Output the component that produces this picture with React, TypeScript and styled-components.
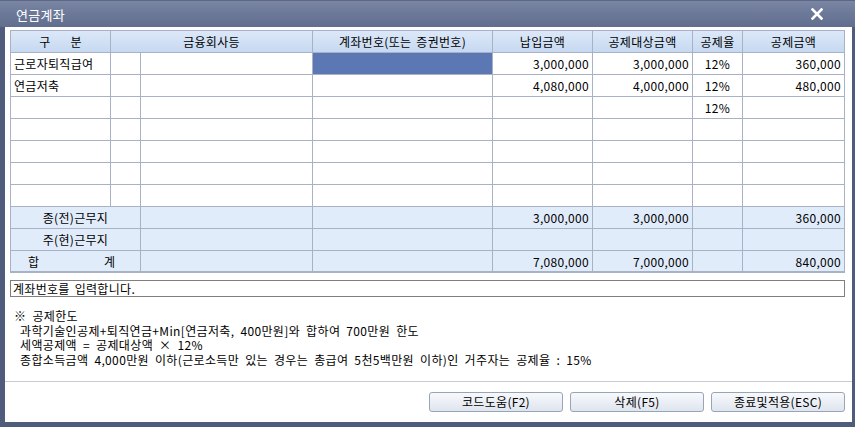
import styled, { createGlobalStyle } from 'styled-components';

const GlobalStyle = createGlobalStyle`
  html, body {
    margin: 0;
    padding: 0;
    background: #ffffff;
  }
  body {
    font-family: "Noto Sans CJK KR", "Noto Sans", sans-serif;
    font-size: 12px;
    color: #000000;
  }
`;

type Align = 'left' | 'center' | 'right';
type Tone = 'plain' | 'sum' | 'selected';

type Row = {
    label: string;
    paid: string;
    target: string;
    rate: string;
    amount: string;
    selected?: boolean;
};

const rows: Row[] = [
    { label: '근로자퇴직급여', paid: '3,000,000', target: '3,000,000', rate: '12%', amount: '360,000', selected: true },
    { label: '연금저축', paid: '4,080,000', target: '4,000,000', rate: '12%', amount: '480,000' },
    { label: '', paid: '', target: '', rate: '12%', amount: '' },
    { label: '', paid: '', target: '', rate: '', amount: '' },
    { label: '', paid: '', target: '', rate: '', amount: '' },
    { label: '', paid: '', target: '', rate: '', amount: '' },
    { label: '', paid: '', target: '', rate: '', amount: '' },
];

const sums = [
    { label: '종(전)근무지', paid: '3,000,000', target: '3,000,000', amount: '360,000' },
    { label: '주(현)근무지', paid: '', target: '', amount: '' },
    { label: '합계', paid: '7,080,000', target: '7,000,000', amount: '840,000' },
];

const notes = [
    '※ 공제한도',
    ' 과학기술인공제+퇴직연금+Min[연금저축, 400만원]와 합하여 700만원 한도',
    ' 세액공제액 = 공제대상액 × 12%',
    ' 종합소득금액 4,000만원 이하(근로소득만 있는 경우는 총급여 5천5백만원 이하)인 거주자는 공제율 : 15%',
];

const App = () => {
    return (
        <>
            <GlobalStyle />
            <Frame>
                <TitleBar>
                    <Title>연금계좌</Title>
                    <CloseButton aria-label="닫기">
                        <svg width="12" height="12" viewBox="0 0 12 12">
                            <path d="M1.5 1.5 L10.5 10.5 M10.5 1.5 L1.5 10.5" stroke="#ffffff" strokeWidth="2.6" strokeLinecap="square" />
                        </svg>
                    </CloseButton>
                </TitleBar>
                <Body>
                    <Grid>
                        <HeadCell>구&nbsp;&nbsp;&nbsp;&nbsp;분</HeadCell>
                        <HeadCell $span={2}>금융회사등</HeadCell>
                        <HeadCell>계좌번호(또는 증권번호)</HeadCell>
                        <HeadCell>납입금액</HeadCell>
                        <HeadCell>공제대상금액</HeadCell>
                        <HeadCell>공제율</HeadCell>
                        <HeadCell>공제금액</HeadCell>

                        {rows.map((row, i) => (
                            <RowGroup key={i}>
                                <Cell>{row.label}</Cell>
                                <Cell />
                                <Cell />
                                <Cell $tone={row.selected ? 'selected' : 'plain'} />
                                <Cell $align="right">{row.paid}</Cell>
                                <Cell $align="right">{row.target}</Cell>
                                <Cell $align="center">{row.rate}</Cell>
                                <Cell $align="right">{row.amount}</Cell>
                            </RowGroup>
                        ))}

                        {sums.map((row, i) => (
                            <RowGroup key={'s' + i}>
                                {row.label === '합계' ? (
                                    <TotalLabel>
                                        <span>합</span>
                                        <span>계</span>
                                    </TotalLabel>
                                ) : (
                                    <Cell $tone="sum" $span={2} $align="center">{row.label}</Cell>
                                )}
                                <Cell $tone="sum" />
                                <Cell $tone="sum" />
                                <Cell $tone="sum" $align="right">{row.paid}</Cell>
                                <Cell $tone="sum" $align="right">{row.target}</Cell>
                                <Cell $tone="sum" />
                                <Cell $tone="sum" $align="right">{row.amount}</Cell>
                            </RowGroup>
                        ))}
                    </Grid>

                    <StatusBox>계좌번호를 입력합니다.</StatusBox>

                    <Notes>
                        {notes.map((line, i) => (
                            <NoteLine key={i}>{line}</NoteLine>
                        ))}
                    </Notes>

                    <Footer>
                        <ActionButton>코드도움(F2)</ActionButton>
                        <ActionButton>삭제(F5)</ActionButton>
                        <ActionButton>종료및적용(ESC)</ActionButton>
                    </Footer>
                </Body>
            </Frame>
        </>
    );
};

const Frame = styled.div`
  width: 855px;
  height: 427px;
  box-sizing: border-box;
  display: flex;
  flex-direction: column;
  background: #4f5c7b;
  overflow: hidden;
`;

const TitleBar = styled.div`
  height: 27px;
  flex: none;
  display: flex;
  align-items: center;
  justify-content: space-between;
  padding: 0 31px 0 16px;
  background: linear-gradient(#7a86a3 0%, #6c7999 45%, #616e8d 100%);
  border-top: 1px solid #5a6785;
  box-sizing: border-box;
`;

const Title = styled.div`
  color: #ffffff;
  font-size: 13px;
  letter-spacing: 0.3px;
`;

const CloseButton = styled.div`
  width: 14px;
  height: 14px;
  display: flex;
  align-items: center;
  justify-content: center;
`;

const Body = styled.div`
  flex: 1;
  margin: 0 3px 5px 5px;
  padding: 3px 6px 0 5px;
  background: #ffffff;
  display: flex;
  flex-direction: column;
  min-height: 0;
`;

const Grid = styled.div`
  display: grid;
  grid-template-columns: 99px 29px 171px 179px 99px 99px 49px 101px;
  grid-template-rows: repeat(10, 21px) 20px;
  gap: 1px;
  padding: 1px 1px 2px 1px;
  background: #a9b2c5;
  width: max-content;
`;

const RowGroup = styled.div`
  display: contents;
`;

const HeadCell = styled.div<{ $span?: number }>`
  grid-column: span ${p => p.$span ?? 1};
  background: linear-gradient(#dce8f8, #c6d9f1);
  display: flex;
  align-items: center;
  justify-content: center;
  white-space: nowrap;
  letter-spacing: 0.3px;
  word-spacing: 2px;
`;

const toneColor = (tone?: Tone) => {
    if (tone === 'sum') return '#e1ecfa';
    if (tone === 'selected') return '#5b78b4';
    return '#ffffff';
};

const Cell = styled.div<{ $align?: Align; $tone?: Tone; $span?: number }>`
  grid-column: span ${p => p.$span ?? 1};
  background: ${p => toneColor(p.$tone)};
  display: flex;
  align-items: center;
  justify-content: ${p => (p.$align === 'right' ? 'flex-end' : p.$align === 'center' ? 'center' : 'flex-start')};
  padding: 0 3px 0 3px;
  white-space: nowrap;
  overflow: hidden;
  letter-spacing: 0.3px;
`;

const TotalLabel = styled.div`
  grid-column: 1 / span 2;
  background: #e1ecfa;
  display: flex;
  align-items: center;
  justify-content: flex-start;
  gap: 65px;
  padding-left: 17px;
`;

const StatusBox = styled.div`
  margin-top: 7px;
  width: 835px;
  height: 17px;
  box-sizing: border-box;
  border: 1px solid #7f7f7f;
  padding: 0 2px;
  display: flex;
  align-items: center;
  line-height: 1;
  letter-spacing: 0.3px;
  word-spacing: 2px;
`;

const Notes = styled.div`
  margin-top: 12px;
  padding-left: 4px;
  font-size: 12px;
  line-height: 14.5px;
  letter-spacing: 0.35px;
  word-spacing: 3px;
`;

const NoteLine = styled.div`
  white-space: pre;
`;

const Footer = styled.div`
  margin: auto -6px 0 -5px;
  border-top: 1px solid #c6cbd4;
  display: flex;
  justify-content: flex-end;
  gap: 7px;
  padding: 10px 7px 10px 0;
`;

const ActionButton = styled.button`
  width: 134px;
  height: 20px;
  padding: 0;
  border: 1px solid #98a4b8;
  border-radius: 3px;
  background: linear-gradient(#f7f9fc, #dfe5ee);
  font-family: "Noto Sans CJK KR", "Noto Sans", sans-serif;
  font-size: 12px;
  color: #000000;
  line-height: 1;
  letter-spacing: 0.3px;
`;

export default App;
